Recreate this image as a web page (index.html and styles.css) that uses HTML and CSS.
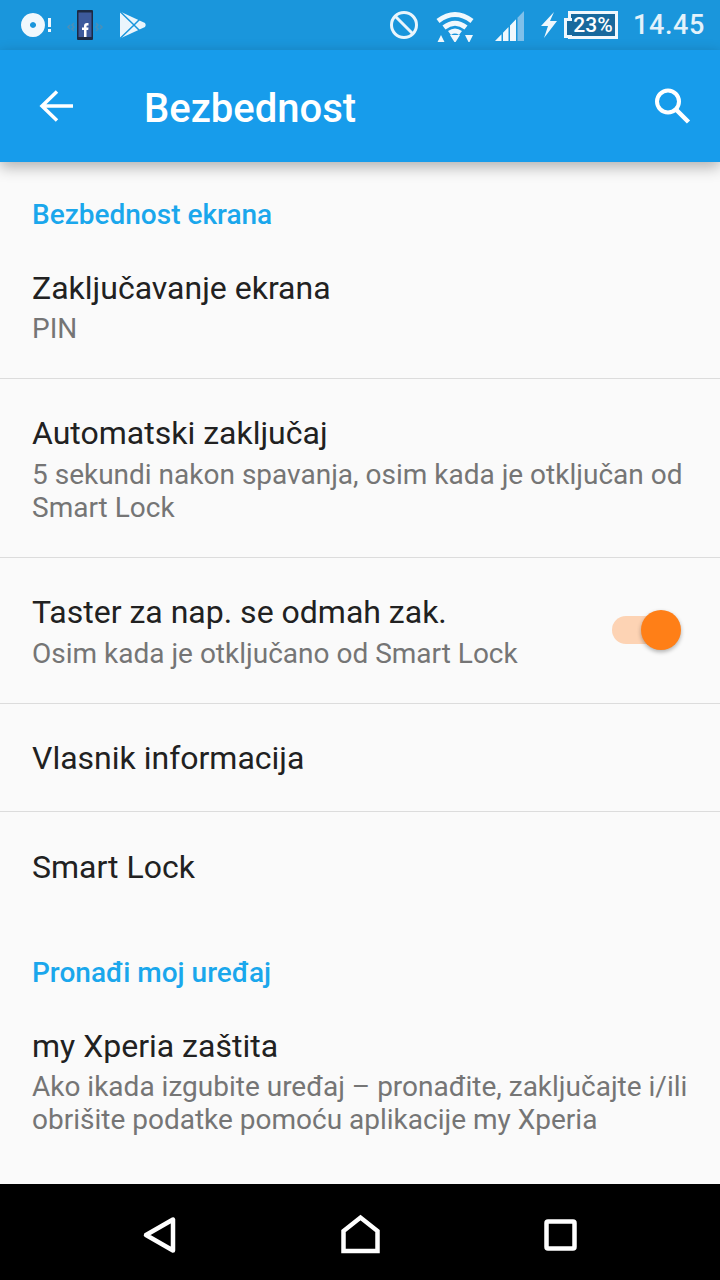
FILE: index.html
```html
<!DOCTYPE html>
<html>
    <head>
        <meta charset="utf-8">
        <title>Bezbednost</title>
        <link rel="stylesheet" href="styles.css">
    </head>
    <body>
        <!-- status bar -->
        <div class="status-bar">
            <svg class="icon-disc" width="34" height="30" viewBox="0 0 34 30">
                <path fill-rule="evenodd" fill="#f0f8fd" d="M13 12a3 3 0 1 0 0.01 0zM13 3a12 12 0 1 1-0.01 0z"/>
                <rect x="28" y="8" width="3" height="9" fill="#f0f8fd"/>
                <rect x="28" y="19" width="3" height="3" fill="#f0f8fd"/>
            </svg>
            <svg class="icon-fb" width="38" height="32" viewBox="0 0 38 32">
                <g stroke="#4a8fb8" stroke-width="1.500" fill="none">
                    <path d="M8 14l-2 2 2 2-2 2 2 2M4 16l-2 2 2 2"/>
                    <path d="M30 14l2 2-2 2 2 2-2 2M34 16l2 2-2 2"/>
                </g>
                <rect x="11" y="1" width="16" height="30" rx="1" fill="#1c2a44"/>
                <rect x="12.500" y="3.500" width="13" height="24.500" fill="#3d5a9c"/>
                <path fill="#fff" d="M18 28v-7h-2v-2.500h2v-1.500c0-2 1-3 3-3h1.500v2.500h-1c-.8 0-1 .3-1 1v1h2l-.3 2.500h-1.700v7z"/>
            </svg>
            <svg class="icon-play" width="30" height="30" viewBox="0 0 30 30">
                <path fill="#eaf5fc" d="M2 1.500L27 13q1.500 2 0 4L2 28.500z"/>
                <path d="M2 1.500L16 15 2 28.500M16 15l6-6M16 15l6 6" fill="none" stroke="#1a96dc" stroke-width="1.500"/>
            </svg>
            <div class="status-right">
                <svg width="30" height="30" viewBox="0 0 30 30">
                    <circle cx="15" cy="15" r="12.500" fill="none" stroke="#eaf5fc" stroke-width="3"/>
                    <path d="M6 6l18 18" stroke="#eaf5fc" stroke-width="3"/>
                </svg>
                <svg class="icon-wifi" width="42" height="34" viewBox="0 0 42 34">
                    <g fill="none" stroke="#f0f8fd" stroke-width="5">
                        <path d="M4 13Q21 0 38 13"/>
                        <path d="M10 19.500Q21 11 32 19.500"/>
                        <path d="M15.500 25Q21 21 26.500 25"/>
                    </g>
                    <path fill="#f0f8fd" d="M16 27h10l-5 8zM7 27l4 8h-8zM31 27h8l-4 8z"/>
                </svg>
                <svg class="icon-signal" width="34" height="34" viewBox="0 0 34 34">
                    <path fill="#f0f8fd" d="M3 33l6.500-6.700v6.700zM11 24.800l5.500-5.700v13.900h-5.500zM18 17.500l6-6.200v21.700h-6z"/>
                    <path fill="#7fc0ea" d="M25.500 9.700l6.500-6.700v30h-6.500z"/>
                </svg>
                <svg class="icon-bolt" width="18" height="28" viewBox="0 0 18 28">
                    <path fill="#f0f8fd" d="M14 1L1 15h7L4 27l13-17h-7z"/>
                </svg>
                <div class="battery">23%</div>
                <span class="clock">14.45</span>
            </div>
        </div>

        <!-- toolbar -->
        <div class="toolbar">
            <svg class="toolbar-back" width="36" height="36" viewBox="0 0 36 36">
                <path d="M35 18H5M19 3.500L4 18l15 14.500" fill="none" stroke="#fff" stroke-width="3.500"/>
            </svg>
            <h1 class="toolbar-title">Bezbednost</h1>
            <svg width="38" height="38" viewBox="0 0 38 38">
                <circle cx="15" cy="14.500" r="11" fill="none" stroke="#fff" stroke-width="4"/>
                <path d="M23 22.500l12.500 12.500" stroke="#fff" stroke-width="4.500"/>
            </svg>
        </div>

        <!-- settings list -->
        <div class="content">
            <div class="section-title section-first">Bezbednost ekrana</div>
            <div class="row row-short line">
                <div class="row-text">
                    <div class="row-title">Zaključavanje ekrana</div>
                    <div class="row-sub">PIN</div>
                </div>
            </div>
            <div class="row line">
                <div class="row-text">
                    <div class="row-title">Automatski zaključaj</div>
                    <div class="row-sub row-sub-low">5 sekundi nakon spavanja, osim kada je otključan od Smart Lock</div>
                </div>
            </div>
            <div class="row line">
                <div class="row-text">
                    <div class="row-title">Taster za nap. se odmah zak.</div>
                    <div class="row-sub row-sub-low">Osim kada je otključano od Smart Lock</div>
                </div>
                <div class="toggle"></div>
            </div>
            <div class="row row-short row-gap line">
                <div class="row-text">
                    <div class="row-title">Vlasnik informacija</div>
                </div>
            </div>
            <div class="row">
                <div class="row-text">
                    <div class="row-title">Smart Lock</div>
                </div>
            </div>
            <div class="section-title">Pronađi moj uređaj</div>
            <div class="row">
                <div class="row-text">
                    <div class="row-title">my Xperia zaštita</div>
                    <div class="row-sub">Ako ikada izgubite uređaj – pronađite, zaključajte i/ili obrišite podatke pomoću aplikacije my Xperia</div>
                </div>
            </div>
        </div>

        <!-- navigation bar -->
        <div class="nav-bar">
            <svg width="48" height="48" viewBox="0 0 48 48">
                <path d="M10 24L37 8.500v31z" fill="none" stroke="#fff" stroke-width="4.500" stroke-linejoin="round"/>
            </svg>
            <svg width="48" height="48" viewBox="0 0 48 48">
                <path d="M7.500 40V20L24.500 6.500 41.500 20v20z" fill="none" stroke="#fff" stroke-width="4.500"/>
            </svg>
            <svg width="48" height="48" viewBox="0 0 48 48">
                <rect x="10.500" y="10.500" width="28" height="27" rx="1.500" fill="none" stroke="#fff" stroke-width="4.500"/>
            </svg>
        </div>
    </body>
</html>
```

FILE: styles.css
```css
*{
    margin: 0;
    padding: 0;
    box-sizing: border-box;
}
body{
    width: 720px;
    height: 1280px;
    display: flex;
    flex-direction: column;
    overflow: hidden;
    background-color: #fafafa;
    font-family: Roboto, "Noto Sans", sans-serif;
}
.status-bar{
    height: 50px;
    flex: none;
    display: flex;
    align-items: center;
    padding: 0 16px 0 20px;
    background-color: #1a96dc;
}
.icon-fb{
    margin-left: 12px;
}
.icon-play{
    margin-left: 14px;
}
.status-right{
    margin-left: auto;
    display: flex;
    align-items: center;
}
.icon-wifi{
    margin-left: 15px;
}
.icon-signal{
    margin-left: 16px;
}
.icon-bolt{
    margin-left: 14px;
}
.battery{
    position: relative;
    width: 50px;
    height: 28px;
    margin-left: 10px;
    border: 3px solid #f0f8fd;
    background-color: #17699d;
    color: #fff;
    font-size: 21px;
    font-weight: 500;
    line-height: 22px;
    text-align: center;
}
.battery::before{
    content: "";
    position: absolute;
    left: -7px;
    top: 4px;
    width: 5px;
    height: 14px;
    border: 3px solid #f0f8fd;
    border-right: none;
    background-color: #17699d;
}
.clock{
    width: 71px;
    margin-left: 15px;
    color: #e3f2fb;
    font-size: 27px;
    font-weight: 500;
    letter-spacing: 0.6px;
    white-space: nowrap;
}
.toolbar{
    position: relative;
    z-index: 1;
    height: 112px;
    flex: none;
    display: flex;
    align-items: center;
    padding: 0 29px 0 38px;
    background-color: #179ceb;
    box-shadow: 0 5px 14px rgba(0, 0, 0, 0.3);
}
.toolbar-title{
    flex: 1;
    margin: 5px 0 0 70px;
    color: #fff;
    font-size: 40px;
    font-weight: 500;
}
.content{
    flex: 1;
    overflow: hidden;
}
.section-title{
    height: 71px;
    padding: 34px 32px 0;
    color: #1aa7ec;
    font-size: 28px;
    font-weight: 500;
    line-height: 36px;
}
.section-first{
    height: 72px;
    padding-top: 35px;
}
.row{
    display: flex;
    align-items: center;
    padding: 34px 39px 34px 32px;
}
.row-short{
    padding-bottom: 33px;
}
.row-gap{
    margin-bottom: 1px;
}
.line{
    border-bottom: 1px solid #dcdcdc;
}
.row-text{
    flex: 1;
}
.row-title{
    color: #212121;
    font-size: 32px;
    line-height: 40px;
}
.row-sub{
    margin: 4px -7px 0 0;
    color: #757575;
    font-size: 28px;
    line-height: 33px;
}
.row-sub-low{
    margin-top: 5px;
    margin-bottom: -1px;
}
.toggle{
    position: relative;
    width: 69px;
    height: 40px;
    margin-top: -2px;
}
.toggle::before{
    content: "";
    position: absolute;
    left: 0;
    top: 6px;
    width: 58px;
    height: 28px;
    border-radius: 14px;
    background-color: #fdd3b4;
}
.toggle::after{
    content: "";
    position: absolute;
    right: 0;
    top: 0;
    width: 40px;
    height: 40px;
    border-radius: 50%;
    background-color: #ff7f17;
    box-shadow: 0 2px 4px rgba(0, 0, 0, 0.3);
}
.nav-bar{
    height: 96px;
    flex: none;
    display: flex;
    align-items: center;
    justify-content: center;
    gap: 152px;
    padding-top: 6px;
    background-color: #000;
}
```
